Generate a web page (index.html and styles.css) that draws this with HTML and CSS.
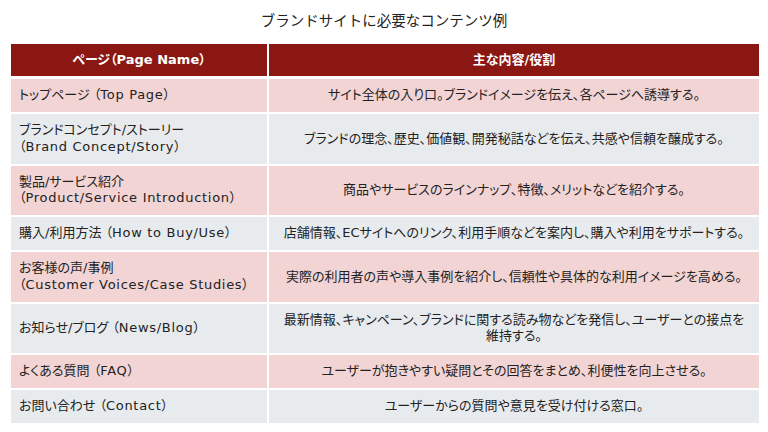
FILE: index.html
```html
<!DOCTYPE html>
<html lang="ja">
<head>
<meta charset="utf-8">
<link rel="stylesheet" href="styles.css">
</head>
<body>
<div class="page">
  <h1 class="title">ブランドサイトに必要なコンテンツ例</h1>
  <div class="table">
    <div class="cell head">ページ（Page Name）</div>
    <div class="cell head">主な内容/役割</div>

    <div class="cell name pink"><span>トップページ （<span class="en">Top Page</span>）</span></div>
    <div class="cell desc pink">サイト全体の入り口。ブランドイメージを伝え、各ページへ誘導する。</div>

    <div class="cell name gray"><span>ブランドコンセプト/ストーリー<br>（<span class="en">Brand Concept/Story</span>）</span></div>
    <div class="cell desc gray">ブランドの理念、歴史、価値観、開発秘話などを伝え、共感や信頼を醸成する。</div>

    <div class="cell name pink"><span>製品/サービス紹介<br>（<span class="en">Product/Service Introduction</span>）</span></div>
    <div class="cell desc pink">商品やサービスのラインナップ、特徴、メリットなどを紹介する。</div>

    <div class="cell name gray"><span>購入/利用方法 （<span class="en">How to Buy/Use</span>）</span></div>
    <div class="cell desc gray">店舗情報、ECサイトへのリンク、利用手順などを案内し、購入や利用をサポートする。</div>

    <div class="cell name pink"><span>お客様の声/事例<br>（<span class="en">Customer Voices/Case Studies</span>）</span></div>
    <div class="cell desc pink">実際の利用者の声や導入事例を紹介し、信頼性や具体的な利用イメージを高める。</div>

    <div class="cell name gray"><span>お知らせ/ブログ （<span class="en">News/Blog</span>）</span></div>
    <div class="cell desc gray">最新情報、キャンペーン、ブランドに関する読み物などを発信し、ユーザーとの接点を<br>維持する。</div>

    <div class="cell name pink"><span>よくある質問 （<span class="en">FAQ</span>）</span></div>
    <div class="cell desc pink">ユーザーが抱きやすい疑問とその回答をまとめ、利便性を向上させる。</div>

    <div class="cell name gray"><span>お問い合わせ （<span class="en">Contact</span>）</span></div>
    <div class="cell desc gray">ユーザーからの質問や意見を受け付ける窓口。</div>
  </div>
</div>
</body>
</html>
```
FILE: styles.css
```css
* { box-sizing: border-box; }
html, body { margin: 0; padding: 0; background: #ffffff; }
body {
  font-family: "DejaVu Sans", "Noto Sans CJK JP", sans-serif;
  color: #222222;
}
.page {
  width: 768px;
  height: 432px;
  padding: 0 11px;
}
.title {
  margin: 0;
  padding-top: 9px;
  height: 44px;
  font-family: "Noto Sans CJK JP", sans-serif;
  font-size: 14.5px;
  font-weight: 400;
  line-height: 22px;
  text-align: center;
  color: #222;
}
.table {
  display: grid;
  grid-template-columns: 256px 490px;
  column-gap: 2px;
  row-gap: 2px;
}
.cell {
  font-size: 13px;
  line-height: 16.5px;
  padding: 8.25px 9px;
  display: flex;
  align-items: center;
  white-space: nowrap;
  font-feature-settings: "palt";
}
.head {
  background: #8b1713;
  color: #ffffff;
  font-weight: 700;
  justify-content: center;
  height: 32px;
  padding: 0;
  margin-bottom: 1px;
}
.name { padding-left: 8px; }
.en { letter-spacing: 0.7px; }
.desc {
  justify-content: center;
  text-align: center;
}
.pink { background: #f2d4d5; }
.gray { background: #e8ebee; }
```
